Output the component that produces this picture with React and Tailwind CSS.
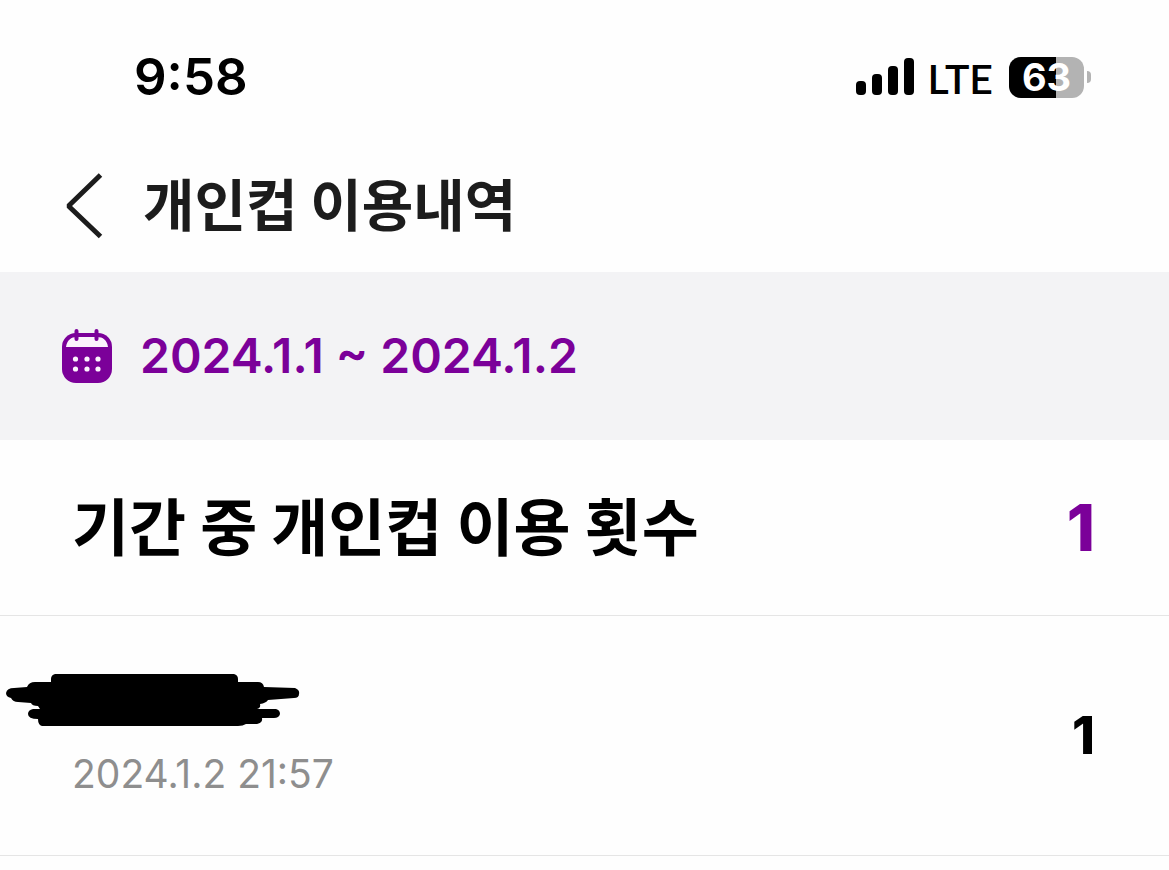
import React from "react";

const SignalIcon = () => (
    <svg width="58" height="38" viewBox="0 0 58 38" aria-hidden="true">
        <rect x="0" y="23" width="10" height="14" rx="4" />
        <rect x="16" y="16" width="10" height="21" rx="4" />
        <rect x="32" y="8" width="10" height="29" rx="4" />
        <rect x="48" y="0" width="10" height="37" rx="4" />
    </svg>
);

const Battery = ({ level }) => (
    <div className="flex items-center gap-[3px]">
        <div className="relative flex h-[41px] w-[75px] items-center justify-center rounded-xl bg-[#b3b3b3]">
            <div className="absolute inset-y-0 left-0 rounded-l-xl bg-black" style={{ width: `${level}%` }} />
            <span className="relative font-['Inter',sans-serif] text-[38px] leading-10 font-bold text-white">{level}</span>
        </div>
        <div className="h-3 w-1 rounded-r-full bg-[#b3b3b3]" />
    </div>
);

const StatusBar = () => (
    <div className="flex h-[140px] items-center justify-between pt-3.5 pr-[78px] pl-[134px] text-black">
        <span className="font-['Inter',sans-serif] text-[51px] leading-[60px] font-semibold">9:58</span>
        <div className="flex items-center">
            <SignalIcon />
            <span className="ml-3.5 pt-1 font-['Lato',sans-serif] text-[41px] leading-[48px] font-semibold">LTE</span>
            <div className="ml-4">
                <Battery level={63} />
            </div>
        </div>
    </div>
);

const BackIcon = () => (
    <svg width="38" height="66" viewBox="0 0 38 66" fill="none" stroke="#1c1c1c" strokeWidth="5" strokeLinejoin="bevel" aria-hidden="true">
        <path d="M35.5 2 3.5 33 35.5 63.5" />
    </svg>
);

const CalendarIcon = () => (
    <svg width="50" height="54" viewBox="0 0 50 54" aria-hidden="true">
        <rect x="0" y="4" width="50" height="50" rx="14" fill="#7b0099" />
        <path d="M4 18C5 11 9 8 15 8H35C41 8 45 11 46 18Z" fill="#fbf3fc" />
        <path d="M14.5 2V10M34.5 2V10" stroke="#7b0099" strokeWidth="4" strokeLinecap="round" />
        <g fill="#fbf3fc">
            <circle cx="13.5" cy="30" r="2.6" />
            <circle cx="25" cy="30" r="2.6" />
            <circle cx="36" cy="30" r="2.6" />
            <circle cx="13.5" cy="40" r="2.6" />
            <circle cx="25" cy="40" r="2.6" />
            <circle cx="36" cy="40" r="2.6" />
        </g>
    </svg>
);

const Scribble = () => (
    <svg className="block" width="294" height="52" viewBox="0 0 294 52" aria-hidden="true">
        <path d="M49 0H228Q232 1 232 5V8H252Q257 8 258 13L289 14Q294 16 293 20Q293 24 288 24L262 26Q260 29 254 30Q255 34 251 35H270Q274 36 274 40Q273 44 268 44H256Q257 49 251 50H240Q237 52 232 52H36Q32 51 32 45Q22 45 22 40Q22 36 27 35H34L32 32Q26 32 25 29L12 28Q7 28 5 24Q0 23 0 19Q1 14 8 14L21 13Q23 8 29 8H45V5Q45 1 49 0Z" />
    </svg>
);

const App = () => {
    return (
        <main className="min-h-screen bg-[#fefefe] font-['Inter','Noto_Sans_CJK_KR',sans-serif]">
            <StatusBar />

            <header className="flex h-[132px] items-center gap-10 pl-[65px]">
                <button type="button" aria-label="뒤로">
                    <BackIcon />
                </button>
                <h1 className="pb-2 font-['Noto_Sans_CJK_KR',sans-serif] text-[56px] leading-[80px] font-bold text-[#1c1c1c]">개인컵 이용내역</h1>
            </header>

            <button type="button" className="flex h-[168px] w-full items-center gap-7 bg-[#f3f3f5] pl-[62px] text-[48px] leading-[60px] font-semibold text-[#7b0099]">
                <CalendarIcon />
                <span>2024.1.1 ~ 2024.1.2</span>
            </button>

            <section className="flex h-[176px] items-center justify-between border-b border-[#e5e5e5] pr-[74px] pl-[72px]">
                <h2 className="pb-2 font-['Noto_Sans_CJK_KR',sans-serif] text-[62px] leading-[88px] font-bold text-black">기간 중 개인컵 이용 횟수</h2>
                <span className="text-[64px] leading-[80px] font-extrabold text-[#7b0099]">1</span>
            </section>

            <ul>
                <li className="flex h-[240px] items-center justify-between border-b border-[#e5e5e5] pr-[74px] pl-[6px]">
                    <div>
                        <Scribble />
                        <time className="mt-6 block pl-[66px] text-[39px] leading-[48px] text-[#8e8e8e]">2024.1.2 21:57</time>
                    </div>
                    <span className="text-[52px] leading-[64px] font-extrabold text-black">1</span>
                </li>
            </ul>
        </main>
    );
};

export default App;
